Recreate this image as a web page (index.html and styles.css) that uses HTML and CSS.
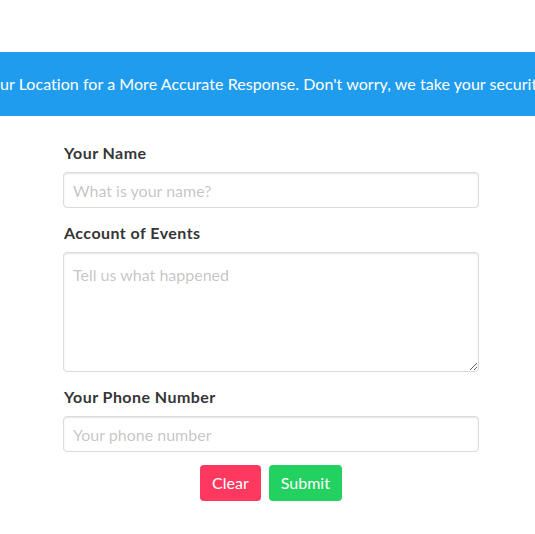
FILE: index.html
```html
<!DOCTYPE html>
<html lang="en">
<head>
<meta charset="utf-8">
<title>Report</title>
<link rel="stylesheet" href="styles.css">
</head>
<body>
  <div class="banner">
    <p class="banner-text"><span class="pre">Please Share Yo</span>ur Location for a More Accurate Response. Don't worry, we take your security seriously.</p>
  </div>
  <form class="form">
    <div class="field">
      <label class="label">Your Name</label>
      <input class="input" type="text" placeholder="What is your name?">
    </div>
    <div class="field">
      <label class="label">Account of Events</label>
      <textarea class="textarea" placeholder="Tell us what happened"></textarea>
    </div>
    <div class="field">
      <label class="label">Your Phone Number</label>
      <input class="input" type="text" placeholder="Your phone number">
    </div>
    <div class="buttons">
      <button type="button" class="button danger">Clear</button>
      <button type="button" class="button success">Submit</button>
    </div>
  </form>
</body>
</html>
```

FILE: styles.css
```css
* { box-sizing: border-box; }
html, body { margin: 0; padding: 0; background: #fff; }
body {
  font-family: Lato, "Open Sans", sans-serif;
  font-size: 16px;
  color: #4a4a4a;
  padding-top: 52px;
}
.banner {
  background: #209cee;
  height: 64px;
  display: flex;
  align-items: center;
  overflow: hidden;
}
.banner-text {
  margin: 0;
  color: #fff;
  white-space: nowrap;
  font-size: 16px;
  line-height: 24px;
  letter-spacing: 0.05px;
}
.pre {
  display: inline-flex;
  width: 0;
  justify-content: flex-end;
  white-space: nowrap;
}
.form {
  width: 416px;
  margin: 25px 0 0 63px;
}
.field { margin-bottom: 13px; display: flex; flex-direction: column; }
.field:last-of-type { margin-bottom: 12px; }
.label {
  color: #363636;
  font-weight: 700;
  font-size: 16px;
  line-height: 24px;
  letter-spacing: 0.45px;
  margin: 0 0 7px 1px;
}
.input, .textarea {
  font-family: inherit;
  font-size: 16px;
  color: #363636;
  border: 1px solid #dbdbdb;
  border-radius: 4px;
  box-shadow: inset 0 1px 2px rgba(10,10,10,.1);
  background: #fff;
  width: 100%;
  outline: none;
}
.input {
  height: 36px;
  padding: 5px 9px;
  line-height: 24px;
}
.textarea {
  height: 120px;
  padding: 10px 9px;
  line-height: 24px;
  resize: vertical;
  display: block;
}
.input::placeholder, .textarea::placeholder { color: rgba(54,54,54,.3); }
.buttons {
  display: flex;
  justify-content: center;
  gap: 8px;
}
.button {
  font-family: inherit;
  font-size: 16px;
  height: 36px;
  padding: 0 11px;
  border: 1px solid transparent;
  border-radius: 4px;
  color: #fff;
  line-height: 24px;
  cursor: pointer;
}
.danger { background: #ff3860; }
.success { background: #23d160; }
```
